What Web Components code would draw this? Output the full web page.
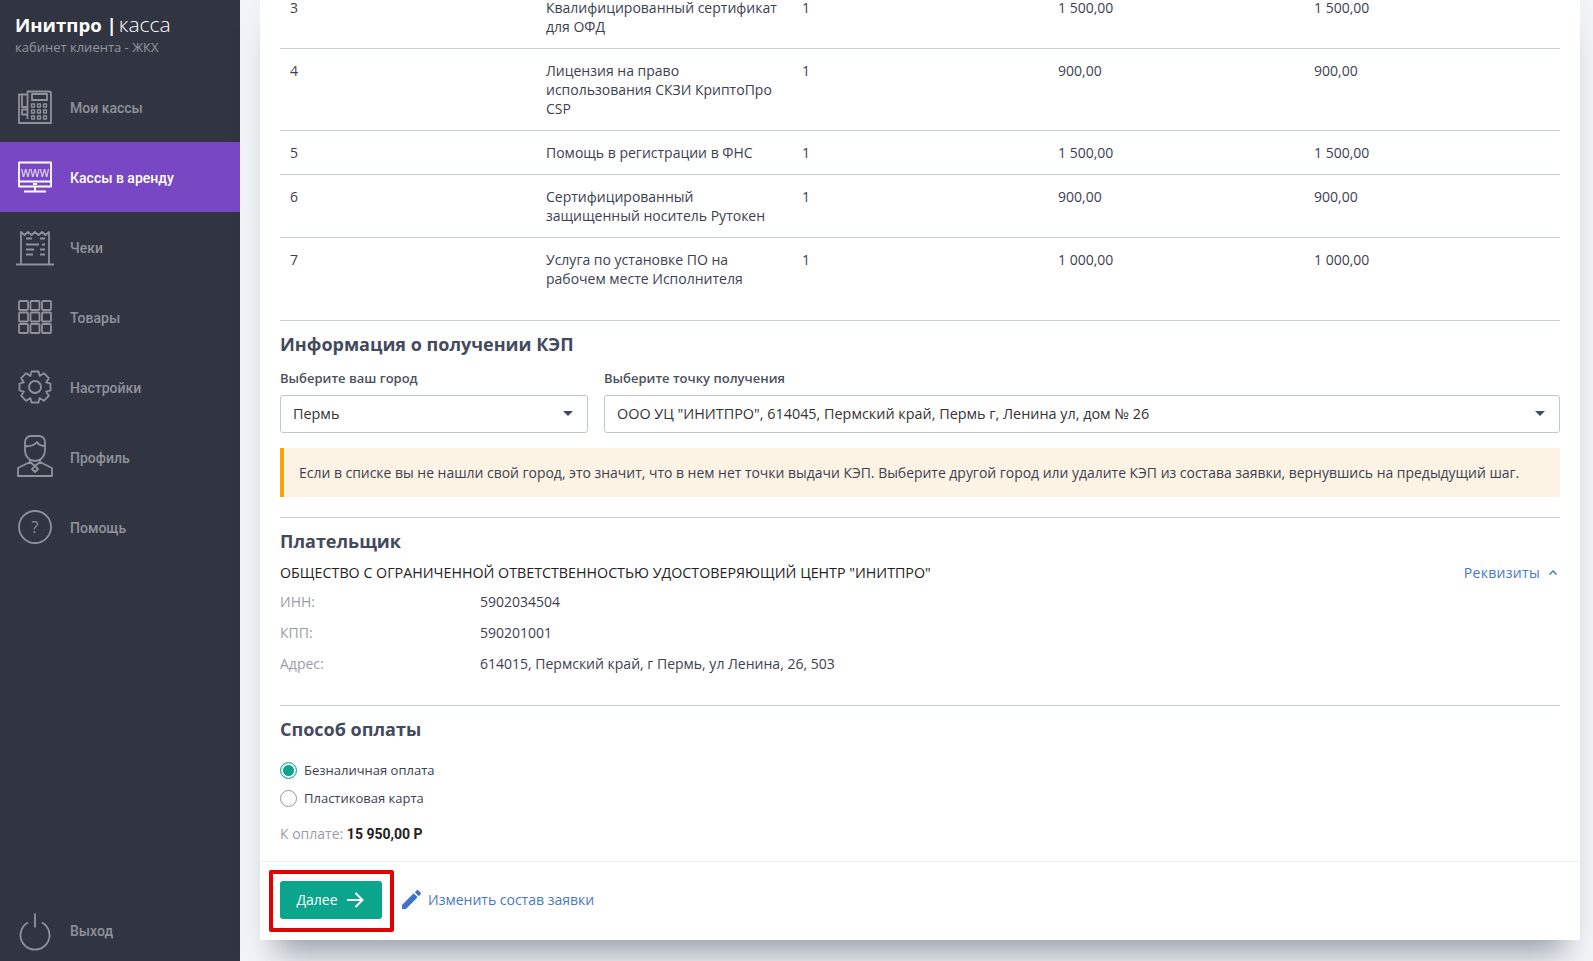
<!DOCTYPE html>
<html lang="ru">
<head>
<meta charset="utf-8">
<title>Инитпро | касса</title>
<style>
  html, body { margin: 0; height: 100%; overflow: hidden; }
  body { font: 14px/19px "Open Sans", "Liberation Sans", sans-serif; color: #3c4150; background: #f2f5f8; }
</style>
</head>
<body>
<app-shell>
  <side-bar slot="side">
    <nav-item label="Мои кассы">
      <svg viewBox="0 0 34 34"><path d="M1 4.500h8.500v-3H31a2 2 0 0 1 2 2V33H1zM4 4.500V17h5.500M4 19.500h5.500v5H4zM9.500 4.500V29"/><rect x="14" y="4" width="15" height="6"/><path stroke-width="1.300" d="M13.500 14h3v3h-3zM19.500 14h3v3h-3zM25.500 14h3v3h-3zM13.500 20h3v3h-3zM19.500 20h3v3h-3zM25.500 20h3v3h-3zM13.500 26h3v3h-3zM19.500 26h3v3h-3zM25.500 26h3v3h-3z"/></svg>
    </nav-item>
    <nav-item label="Кассы в аренду" active>
      <svg viewBox="0 0 34 34"><rect x="1" y="2.500" width="32" height="24"/><path d="M1 21.500h32M17 26v5M6 31.500h22M15 24h4"/><text x="17" y="16.500" text-anchor="middle" font-size="14" textLength="28" lengthAdjust="spacingAndGlyphs" font-family="Open Sans" fill="currentColor" fill-opacity=".85" stroke="none">www</text></svg>
    </nav-item>
    <nav-item label="Чеки">
      <svg viewBox="0 0 34 34"><path d="M3 34V2l3.500 3L10 2l3.500 3L17 2l3.500 3L24 2l3.500 3L31 2v32M-2 34.500h38M8 8.500h6M22 8.500h5M8 14.500h13M24 14.500h3M8 19.500h8M22 19.500h5M8 24.500h7M22 24.500h5"/></svg>
    </nav-item>
    <nav-item label="Товары">
      <svg viewBox="0 0 34 34"><rect x="1" y="1" width="9" height="9" rx="1"/><rect x="12.500" y="1" width="9" height="9" rx="1"/><rect x="24" y="1" width="9" height="9" rx="1"/><rect x="1" y="12.500" width="9" height="9" rx="1"/><rect x="12.500" y="12.500" width="9" height="9" rx="1"/><rect x="24" y="12.500" width="9" height="9" rx="1"/><rect x="1" y="24" width="9" height="9" rx="1"/><rect x="12.500" y="24" width="9" height="9" rx="1"/><rect x="24" y="24" width="9" height="9" rx="1"/></svg>
    </nav-item>
    <nav-item label="Настройки">
      <svg viewBox="0 0 34 34"><path d="M13.500 1.500h7l1.100 4.400 4.200-2.700 5 5-2.700 4.200 4.400 1.100v7l-4.400 1.100 2.700 4.200-5 5-4.200-2.700-1.100 4.400h-7l-1.100-4.400-4.200 2.700-5-5 2.700-4.200-4.400-1.100v-7l4.400-1.100-2.700-4.200 5-5 4.200 2.700z"/><circle cx="17" cy="17" r="6"/></svg>
    </nav-item>
    <nav-item label="Профиль">
      <svg viewBox="0 0 34 34"><path d="M7 10V2a6 6 0 0 1 6-6h8a6 6 0 0 1 6 6v8c0 6-4 11-10 11S7 16 7 10zM7 6c5 1 10-1 12-4 1 2 4 4 8 4M12 19v3L0 28v8h34v-8l-12-6v-3M12 22l5 4 5-4M17 26l-3 3 3 3 3-3z"/></svg>
    </nav-item>
    <nav-item label="Помощь">
      <svg viewBox="0 0 34 34"><circle cx="17" cy="17" r="16"/><text x="17" y="23" text-anchor="middle" font-size="16" font-family="Open Sans" fill="currentColor" stroke="none">?</text></svg>
    </nav-item>
    <nav-item slot="bottom" label="Выход">
      <svg viewBox="0 0 34 34"><path d="M10 9.500a14.500 14.500 0 1 0 14 0M17 .5v14"/></svg>
    </nav-item>
  </side-bar>

  <form-card>
    <order-row num="3" qty="1" price="1 500,00" total="1 500,00">Квалифицированный сертификат<br>для ОФД</order-row>
    <order-row num="4" qty="1" price="900,00" total="900,00">Лицензия на право<br>использования СКЗИ КриптоПро<br>CSP</order-row>
    <order-row num="5" qty="1" price="1 500,00" total="1 500,00">Помощь в регистрации в ФНС</order-row>
    <order-row num="6" qty="1" price="900,00" total="900,00">Сертифицированный<br>защищенный носитель Рутокен</order-row>
    <order-row num="7" qty="1" price="1 000,00" total="1 000,00" last>Услуга по установке ПО на<br>рабочем месте Исполнителя</order-row>

    <form-section heading="Информация о получении КЭП" style="--after: 12px">
      <div style="display:grid;grid-template-columns:308px 1fr;gap:16px">
        <select-box label="Выберите ваш город">Пермь</select-box>
        <select-box label="Выберите точку получения">ООО УЦ "ИНИТПРО", 614045, Пермский край, Пермь г, Ленина ул, дом № 26</select-box>
      </div>
      <alert-note>Если в списке вы не нашли свой город, это значит, что в нем нет точки выдачи КЭП. Выберите другой город или удалите КЭП из состава заявки, вернувшись на предыдущий шаг.</alert-note>
    </form-section>

    <form-section heading="Плательщик" style="--bottom: 26px">
      <payer-head>ОБЩЕСТВО С ОГРАНИЧЕННОЙ ОТВЕТСТВЕННОСТЬЮ УДОСТОВЕРЯЮЩИЙ ЦЕНТР "ИНИТПРО"</payer-head>
      <info-row label="ИНН:">5902034504</info-row>
      <info-row label="КПП:">590201001</info-row>
      <info-row label="Адрес:">614015, Пермский край, г Пермь, ул Ленина, 26, 503</info-row>
    </form-section>

    <form-section heading="Способ оплаты" style="--bottom: 0">
      <radio-option checked style="margin-top: 14px">Безналичная оплата</radio-option>
      <radio-option>Пластиковая карта</radio-option>
      <pay-total>15 950,00 Р</pay-total>
    </form-section>

    <form-footer slot="footer"></form-footer>
  </form-card>
</app-shell>

<script>
const { customElements, HTMLElement } = window

function define (name, html, attrs) {
  const template = document.createElement('template')
  template.innerHTML = html

  customElements.define(name, class extends HTMLElement {
    constructor () {
      super()
      this.attachShadow({ mode: 'open' })
      this.shadowRoot.appendChild(template.content.cloneNode(true))
    }

    connectedCallback () {
      (attrs || []).forEach(attr => {
        const node = this.shadowRoot.querySelector(`[data-${attr}]`)
        if (node) node.textContent = this.getAttribute(attr) || ''
      })
    }
  })
}

define('app-shell', `
  <style>
    :host { display: grid; grid-template-columns: 240px 1fr; height: 961px; overflow: hidden; }
    main { padding: 0 13px 0 20px; min-width: 0; }
  </style>
  <slot name="side"></slot>
  <main><slot></slot></main>
`)

define('side-bar', `
  <style>
    :host { display: flex; flex-direction: column; height: 961px; background: #313541; }
    header { height: 72px; box-sizing: border-box; padding: 10px 0 0 15px; color: #fff; }
    .title { display: flex; align-items: baseline; gap: 2px; font-size: 21px; line-height: 28px; font-weight: 300; }
    .title b { font-size: 18.600px; font-weight: 700; }
    .sub { font-size: 13px; line-height: 18px; margin-top: -1px; color: #92959e; }
    .nav { flex: 1; }
    .bottom { height: 66px; }
  </style>
  <header>
    <div class="title"><b>Инитпро |</b> <span>касса</span></div>
    <div class="sub">кабинет клиента - ЖКХ</div>
  </header>
  <div class="nav"><slot></slot></div>
  <div class="bottom"><slot name="bottom"></slot></div>
`)

define('nav-item', `
  <style>
    :host { display: flex; align-items: center; gap: 18px; height: 70px; padding-left: 18px; color: #8f929b; font: 500 14px/19px Roboto, sans-serif; }
    :host([active]) { background: #7847c4; color: #fff; }
    :host ::slotted(svg) { width: 34px; height: 34px; flex: none; fill: none; stroke: currentColor; stroke-width: 1.800; overflow: visible; stroke-linejoin: round; }
    span { padding-top: 2px; }
  </style>
  <slot></slot>
  <span data-label></span>
`, ['label'])

define('form-card', `
  <style>
    :host { display: block; width: 1320px; margin-top: -14px; background: #fff; box-shadow: 0 28px 30px -16px rgba(60, 70, 85, .5); }
    .body { padding: 0 20px; }
  </style>
  <div class="body"><slot></slot></div>
  <slot name="footer"></slot>
`)

define('order-row', `
  <style>
    :host { display: grid; grid-template-columns: repeat(5, 1fr); border-bottom: 1px solid #c5ced8; padding: 12px 0; }
    :host([last]) { border-bottom: 0; padding-bottom: 32px; }
    div { padding: 0 10px; }
  </style>
  <div data-num></div>
  <div><slot></slot></div>
  <div data-qty></div>
  <div data-price></div>
  <div data-total></div>
`, ['num', 'qty', 'price', 'total'])

define('form-section', `
  <style>
    :host { display: block; border-top: 1px solid #c5ced8; padding: 11px 0 var(--bottom, 20px); }
    h2 { margin: 0 0 var(--after, 11px); font-size: 18px; line-height: 25px; font-weight: 700; color: #434a5c; }
  </style>
  <h2 data-heading></h2>
  <slot></slot>
`, ['heading'])

define('select-box', `
  <style>
    :host { display: block; }
    label { display: block; margin-bottom: 7px; font-size: 13px; line-height: 19px; font-weight: 600; color: #4a5060; }
    .box { display: flex; align-items: center; justify-content: space-between; height: 38px; box-sizing: border-box; padding: 0 14px 1px 12px; border: 1px solid #bcc7d3; border-radius: 3px; color: #333; font-size: 14.400px; }
    i { width: 0; height: 0; border: 5px solid transparent; border-top: 5px solid #434a5c; border-bottom: 0; }
  </style>
  <label data-label></label>
  <div class="box"><span><slot></slot></span><i></i></div>
`, ['label'])

define('alert-note', `
  <style>
    :host { display: block; margin-top: 15px; padding: 15px; background: #fdf3e4; border-left: 4px solid #f7a30a; color: #3c4150; font-size: 13.950px; }
  </style>
  <slot></slot>
`)

define('payer-head', `
  <style>
    :host { display: flex; justify-content: space-between; align-items: center; margin-top: -2px; margin-bottom: 4px; color: #222; font-size: 14.270px; }
    a { display: flex; align-items: center; gap: 9px; color: #4a78c8; padding-right: 3px; font-size: 14px; letter-spacing: .3px; }
    svg { width: 8px; height: 5px; fill: none; stroke: #4a78c8; stroke-width: 1.500; }
  </style>
  <span><slot></slot></span>
  <a>Реквизиты <svg viewBox="0 0 8 5"><path d="M.5 4.500 4 1l3.500 3.500"/></svg></a>
`)

define('info-row', `
  <style>
    :host { display: grid; grid-template-columns: 200px 1fr; padding: 6px 0; }
    span { color: #9a9da5; }
  </style>
  <span data-label></span>
  <div><slot></slot></div>
`, ['label'])

define('radio-option', `
  <style>
    :host { display: flex; align-items: center; gap: 7px; height: 28px; font-size: 13px; }
    i { width: 17px; height: 17px; box-sizing: border-box; border: 1px solid #8f96a3; border-radius: 50%; background: #fff; display: block; }
    :host([checked]) i { border-color: #0aa58c; box-shadow: inset 0 0 0 2px #fff, inset 0 0 0 8px #0aa58c; }
  </style>
  <i></i>
  <span><slot></slot></span>
`)

define('pay-total', `
  <style>
    :host { display: block; margin-top: 12px; padding-bottom: 17px; color: #9a9da5; }
    b { color: #222; font: 700 14px/19px Roboto, sans-serif; }
  </style>
  К оплате: <b><slot></slot></b>
`)

define('form-footer', `
  <style>
    :host { display: flex; align-items: center; gap: 20px; height: 79px; box-sizing: border-box; padding: 0 20px 2px; border-top: 1px solid #edf0f3; position: relative; }
    button { position: relative; display: flex; align-items: center; justify-content: center; gap: 8px; width: 102px; height: 38px; margin: 0; padding: 0 2px 1px 0; border: 0; border-radius: 3px; background: #0aa58c; color: #fff; font: 14px/19px "Open Sans", sans-serif; }
    button::after { content: ""; position: absolute; inset: -11px -12px -13px -11px; border: 4px solid #e60000; border-radius: 2px; }
    a { display: flex; align-items: center; gap: 7px; color: #4a78c8; padding-bottom: 1px; }
    button svg { width: 18px; height: 16px; fill: none; stroke: #fff; stroke-width: 2; }
    a svg { width: 19px; height: 19px; fill: #3f74c9; }
  </style>
  <button>Далее <svg viewBox="0 0 18 16"><path d="M1 8h15M9.500 1l7 7-7 7"/></svg></button>
  <a><svg viewBox="3 3 18 18"><path d="M3 17.250V21h3.750L17.810 9.940l-3.750-3.750L3 17.250zM20.710 7.040a1 1 0 0 0 0-1.410l-2.340-2.340a1 1 0 0 0-1.410 0l-1.830 1.830 3.750 3.750 1.830-1.830z"/></svg>Изменить состав заявки</a>
`)
</script>
</body>
</html>
